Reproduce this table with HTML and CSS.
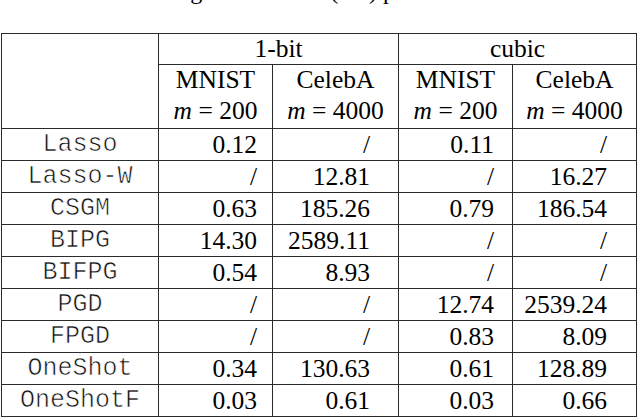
FILE: index.html
```html
<!DOCTYPE html>
<html>
<head>
<meta charset="utf-8">
<link rel="stylesheet" href="styles.css">
</head>
<body>
<div class="caption">Table 2: Running time in total (sec) per test</div>
<table class="results">
  <colgroup>
    <col class="c-name"><col class="c-a"><col class="c-b"><col class="c-c"><col class="c-d">
  </colgroup>
  <thead>
    <tr class="h1">
      <th rowspan="2" class="blank"></th>
      <th colspan="2">1-bit</th>
      <th colspan="2">cubic</th>
    </tr>
    <tr class="h2">
      <th><div class="ds">MNIST</div><div class="mm"><i>m</i> = 200</div></th>
      <th><div class="ds">CelebA</div><div class="mm"><i>m</i> = 4000</div></th>
      <th><div class="ds">MNIST</div><div class="mm"><i>m</i> = 200</div></th>
      <th><div class="ds">CelebA</div><div class="mm"><i>m</i> = 4000</div></th>
    </tr>
  </thead>
  <tbody>
    <tr><td class="name">Lasso</td><td class="v a">0.12</td><td class="v b">/</td><td class="v c">0.11</td><td class="v d">/</td></tr>
    <tr><td class="name">Lasso-W</td><td class="v a">/</td><td class="v b">12.81</td><td class="v c">/</td><td class="v d">16.27</td></tr>
    <tr><td class="name">CSGM</td><td class="v a">0.63</td><td class="v b">185.26</td><td class="v c">0.79</td><td class="v d">186.54</td></tr>
    <tr><td class="name">BIPG</td><td class="v a">14.30</td><td class="v b">2589.11</td><td class="v c">/</td><td class="v d">/</td></tr>
    <tr><td class="name">BIFPG</td><td class="v a">0.54</td><td class="v b">8.93</td><td class="v c">/</td><td class="v d">/</td></tr>
    <tr><td class="name">PGD</td><td class="v a">/</td><td class="v b">/</td><td class="v c">12.74</td><td class="v d">2539.24</td></tr>
    <tr><td class="name">FPGD</td><td class="v a">/</td><td class="v b">/</td><td class="v c">0.83</td><td class="v d">8.09</td></tr>
    <tr><td class="name">OneShot</td><td class="v a">0.34</td><td class="v b">130.63</td><td class="v c">0.61</td><td class="v d">128.89</td></tr>
    <tr><td class="name">OneShotF</td><td class="v a">0.03</td><td class="v b">0.61</td><td class="v c">0.03</td><td class="v d">0.66</td></tr>
  </tbody>
</table>
</body>
</html>
```
FILE: styles.css
```css
html, body {
  margin: 0;
  padding: 0;
  background: #fff;
  overflow: hidden;
}
body {
  width: 640px;
  height: 420px;
  font-family: "Liberation Serif", "Times New Roman", serif;
  color: #000;
}
.caption {
  font-size: 24px;
  line-height: 24px;
  height: 24px;
  margin: -21px 0 30px 0;
  padding-left: 36px;
  text-align: left;
  white-space: nowrap;
}
.results {
  border-collapse: collapse;
  table-layout: fixed;
  width: 636px;
  margin-left: 1px;
  font-size: 25.5px;
}
.c-name { width: 157px; }
.c-a { width: 114px; }
.c-b { width: 126px; }
.c-c { width: 114px; }
.c-d { width: 124px; }
.results th, .results td {
  border: 1px solid #2b2b2b;
  padding: 0;
  font-weight: normal;
}
.h1 th {
  height: 30px;
  line-height: 30px;
  text-align: center;
}
.h2 th {
  height: 61px;
  text-align: center;
  vertical-align: top;
}
.ds {
  line-height: 28px;
  padding-top: 1px;
}
.mm {
  line-height: 34px;
}
.mm i {
  font-style: italic;
}
.results tbody td {
  height: 31px;
  line-height: 31px;
}
.name {
  font-family: "Liberation Mono", "Courier New", monospace;
  font-size: 25px;
  text-align: center;
  color: #111;
  -webkit-text-stroke: 0.6px #fff;
}
.v { text-align: right; }
.v.a { padding-right: 15px; }
.v.b { padding-right: 28px; }
.v.c { padding-right: 18px; }
.v.d { padding-right: 29px; }
```
